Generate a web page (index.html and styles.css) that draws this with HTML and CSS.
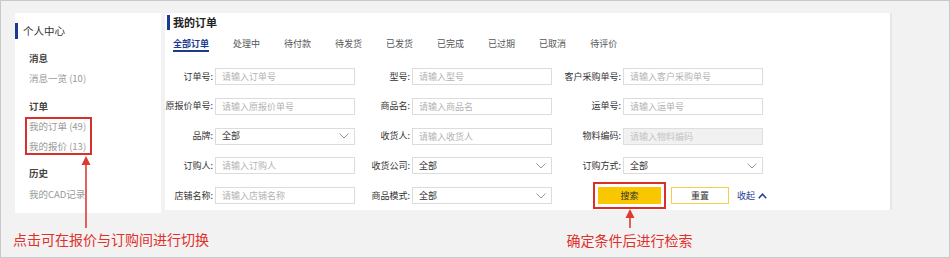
FILE: index.html
```html
<!DOCTYPE html>
<html lang="zh-CN">
<head>
<meta charset="utf-8">
<title>我的订单</title>
<link rel="stylesheet" href="styles.css">
</head>
<body>
<div class="frame">
  <aside class="side">
    <div class="side-title">个人中心</div>
    <div class="grp g-msg">消息</div>
    <div class="item i-msg">消息一览 (10)</div>
    <div class="grp g-order">订单</div>
    <div class="hl">
      <div class="item">我的订单 (49)</div>
      <div class="item i-quote">我的报价 (13)</div>
      <svg class="arrow-left" width="10" height="72" viewBox="0 0 10 72">
        <polygon points="5,0 0.5,9 9.5,9" fill="#e03a30"/>
        <line x1="5" y1="8" x2="5" y2="72" stroke="#e03a30" stroke-width="1.6"/>
      </svg>
    </div>
    <div class="grp g-hist">历史</div>
    <div class="item i-cad">我的CAD记录</div>
  </aside>

  <main class="main">
    <h1 class="title">我的订单</h1>
    <nav class="tabs">
      <span class="tab active">全部订单</span>
      <span class="tab">处理中</span>
      <span class="tab">待付款</span>
      <span class="tab">待发货</span>
      <span class="tab">已发货</span>
      <span class="tab">已完成</span>
      <span class="tab">已过期</span>
      <span class="tab">已取消</span>
      <span class="tab">待评价</span>
    </nav>

    <div class="form">
      <label class="lbl">订单号:</label>
      <input class="field" placeholder="请输入订单号">
      <label class="lbl">型号:</label>
      <input class="field" placeholder="请输入型号">
      <label class="lbl">客户采购单号:</label>
      <input class="field" placeholder="请输入客户采购单号">

      <label class="lbl">原报价单号:</label>
      <input class="field" placeholder="请输入原报价单号">
      <label class="lbl">商品名:</label>
      <input class="field" placeholder="请输入商品名">
      <label class="lbl">运单号:</label>
      <input class="field" placeholder="请输入运单号">

      <label class="lbl">品牌:</label>
      <div class="select"><span>全部</span><svg class="chev" width="10" height="6" viewBox="0 0 10 6"><polyline points="0.5,0.5 5,5 9.5,0.5" fill="none" stroke="#999" stroke-width="1"/></svg></div>
      <label class="lbl">收货人:</label>
      <input class="field" placeholder="请输入收货人">
      <label class="lbl">物料编码:</label>
      <input class="field disabled" placeholder="请输入物料编码" disabled>

      <label class="lbl">订购人:</label>
      <input class="field" placeholder="请输入订购人">
      <label class="lbl">收货公司:</label>
      <div class="select"><span>全部</span><svg class="chev" width="10" height="6" viewBox="0 0 10 6"><polyline points="0.5,0.5 5,5 9.5,0.5" fill="none" stroke="#999" stroke-width="1"/></svg></div>
      <label class="lbl">订购方式:</label>
      <div class="select"><span>全部</span><svg class="chev" width="10" height="6" viewBox="0 0 10 6"><polyline points="0.5,0.5 5,5 9.5,0.5" fill="none" stroke="#999" stroke-width="1"/></svg></div>

      <label class="lbl">店铺名称:</label>
      <input class="field" placeholder="请输入店铺名称">
      <label class="lbl">商品模式:</label>
      <div class="select"><span>全部</span><svg class="chev" width="10" height="6" viewBox="0 0 10 6"><polyline points="0.5,0.5 5,5 9.5,0.5" fill="none" stroke="#999" stroke-width="1"/></svg></div>
      <div class="actions">
        <div class="search-wrap">
          <button class="btn btn-search" type="button">搜索</button>
          <div class="callout-right">
            <svg width="10" height="19" viewBox="0 0 10 19">
              <polygon points="5,0 0.5,9 9.5,9" fill="#e03a30"/>
              <line x1="5" y1="8" x2="5" y2="19" stroke="#e03a30" stroke-width="1.6"/>
            </svg>
            <span class="caption">确定条件后进行检索</span>
          </div>
        </div>
        <button class="btn btn-reset" type="button">重置</button>
        <a class="collapse">收起<svg width="9" height="6" viewBox="0 0 9 6"><polyline points="0.8,5.2 4.5,1.2 8.2,5.2" fill="none" stroke="#1f3f94" stroke-width="1.5"/></svg></a>
      </div>
    </div>
  </main>

  <p class="caption caption-left">点击可在报价与订购间进行切换</p>
</div>
</body>
</html>
```

FILE: styles.css
```css
* { box-sizing: border-box; }

html, body {
  margin: 0;
  padding: 0;
  background: #f2f2f2;
}

body {
  font-family: "Noto Sans CJK SC", "Noto Sans", sans-serif;
  color: #333;
}

.frame {
  position: relative;
  width: 950px;
  height: 258px;
  border: 1px solid #c9c9c9;
  background: #f2f2f2;
  padding: 12px 0 0 14px;
  display: flex;
  align-items: flex-start;
  gap: 4px;
}

/* ---------- sidebar ---------- */
.side {
  width: 146px;
  height: 200px;
  background: #fff;
  padding-top: 10px;
  display: flex;
  flex-direction: column;
  align-items: flex-start;
}

.side-title {
  border-left: 3px solid #1b3c8e;
  padding-left: 5px;
  font-size: 10.5px;
  line-height: 16px;
  color: #333;
}

.grp {
  margin-left: 14px;
  font-size: 9.5px;
  line-height: 14px;
  font-weight: 700;
  color: #444;
}

.item {
  margin-left: 14px;
  font-size: 9.5px;
  line-height: 14px;
  color: #9a9a9a;
}

.g-msg { margin-top: 12px; }
.i-msg { margin-top: 6px; }
.g-order { margin-top: 14px; }
.g-hist { margin-top: 11px; }
.i-cad { margin-top: 7px; }

.hl {
  position: relative;
  margin: 4px 0 0 10px;
  border: 2px solid #d7312b;
  padding: 0 4px 0 2px;
}

.hl .item { margin-left: 0; }
.hl .i-quote { margin-top: 6px; }

.arrow-left {
  position: absolute;
  left: 54px;
  top: calc(100% + 3px);
  display: block;
}

/* ---------- main ---------- */
.main {
  width: 725px;
  height: 197px;
  background: #fff;
  box-shadow: 2px 0 0 #e6e6e6;
  padding-top: 2px;
}

.title {
  margin: 0 0 0 2px;
  border-left: 3px solid #1b3c8e;
  padding-left: 3px;
  font-size: 11px;
  line-height: 15px;
  font-weight: 700;
  color: #222;
}

.tabs {
  display: flex;
  gap: 24px;
  padding-left: 8px;
  margin-top: 7px;
}

.tab {
  font-size: 9px;
  line-height: 13px;
  color: #555;
  border-bottom: 2px solid transparent;
}

.tab.active {
  color: #1b3c8e;
  font-weight: 700;
  border-bottom-color: #1b3c8e;
}

.form {
  margin-top: 16px;
  padding-left: 8px;
  display: grid;
  grid-template-columns: 42px 140px 57px 140px 71px 140px;
  grid-auto-rows: 17px;
  row-gap: 12.75px;
}

.lbl {
  justify-self: end;
  align-self: center;
  padding-right: 2px;
  font-size: 9px;
  line-height: 12px;
  color: #333;
  white-space: nowrap;
}

.field,
.select {
  width: 140px;
  height: 17px;
  margin: 0;
  border: 1px solid #dcdcdc;
  border-radius: 0;
  background: #fff;
  padding: 0 6px;
  font-family: inherit;
  font-size: 9px;
  color: #333;
  outline: none;
}

.field::placeholder { color: #b3b3b3; }

.field.disabled {
  background: #f1f1f1;
  border-color: #dedede;
}
.field.disabled::placeholder { color: #c4c4c4; }

.select {
  display: flex;
  align-items: center;
  justify-content: space-between;
  padding-right: 5px;
}

.select span { line-height: 12px; }
.chev { display: block; }

.actions {
  grid-column: 5 / span 2;
  display: flex;
  align-items: center;
  padding-left: 46px;
  white-space: nowrap;
}

.search-wrap {
  position: relative;
  flex: none;
}

.btn {
  display: block;
  flex: none;
  height: 17px;
  margin: 0;
  padding: 0;
  border-radius: 0;
  font-family: inherit;
  font-size: 9px;
  line-height: 15px;
  color: #333;
  cursor: pointer;
}

.btn-search {
  width: 63px;
  background: #f9c700;
  border: 1px solid #f9c700;
  outline: 2px solid #dc2f28;
  outline-offset: 3px;
}

.btn-reset {
  width: 58px;
  margin-left: 10px;
  background: #fff;
  border: 1px solid #f7cf45;
}

.collapse {
  flex: none;
  margin-left: 8px;
  display: flex;
  align-items: center;
  gap: 3px;
  font-size: 9px;
  line-height: 12px;
  color: #1f3f94;
  white-space: nowrap;
}

.collapse svg { display: block; }

/* ---------- annotations ---------- */
.callout-right {
  position: absolute;
  top: calc(100% + 5px);
  left: 50%;
  transform: translateX(-50%);
  display: flex;
  flex-direction: column;
  align-items: center;
  gap: 3px;
}

.callout-right svg { display: block; }

.caption {
  margin: 0;
  font-size: 14px;
  line-height: 18px;
  color: #e0302a;
  white-space: nowrap;
}

.caption-left {
  position: absolute;
  left: 12px;
  top: 229px;
}
```
